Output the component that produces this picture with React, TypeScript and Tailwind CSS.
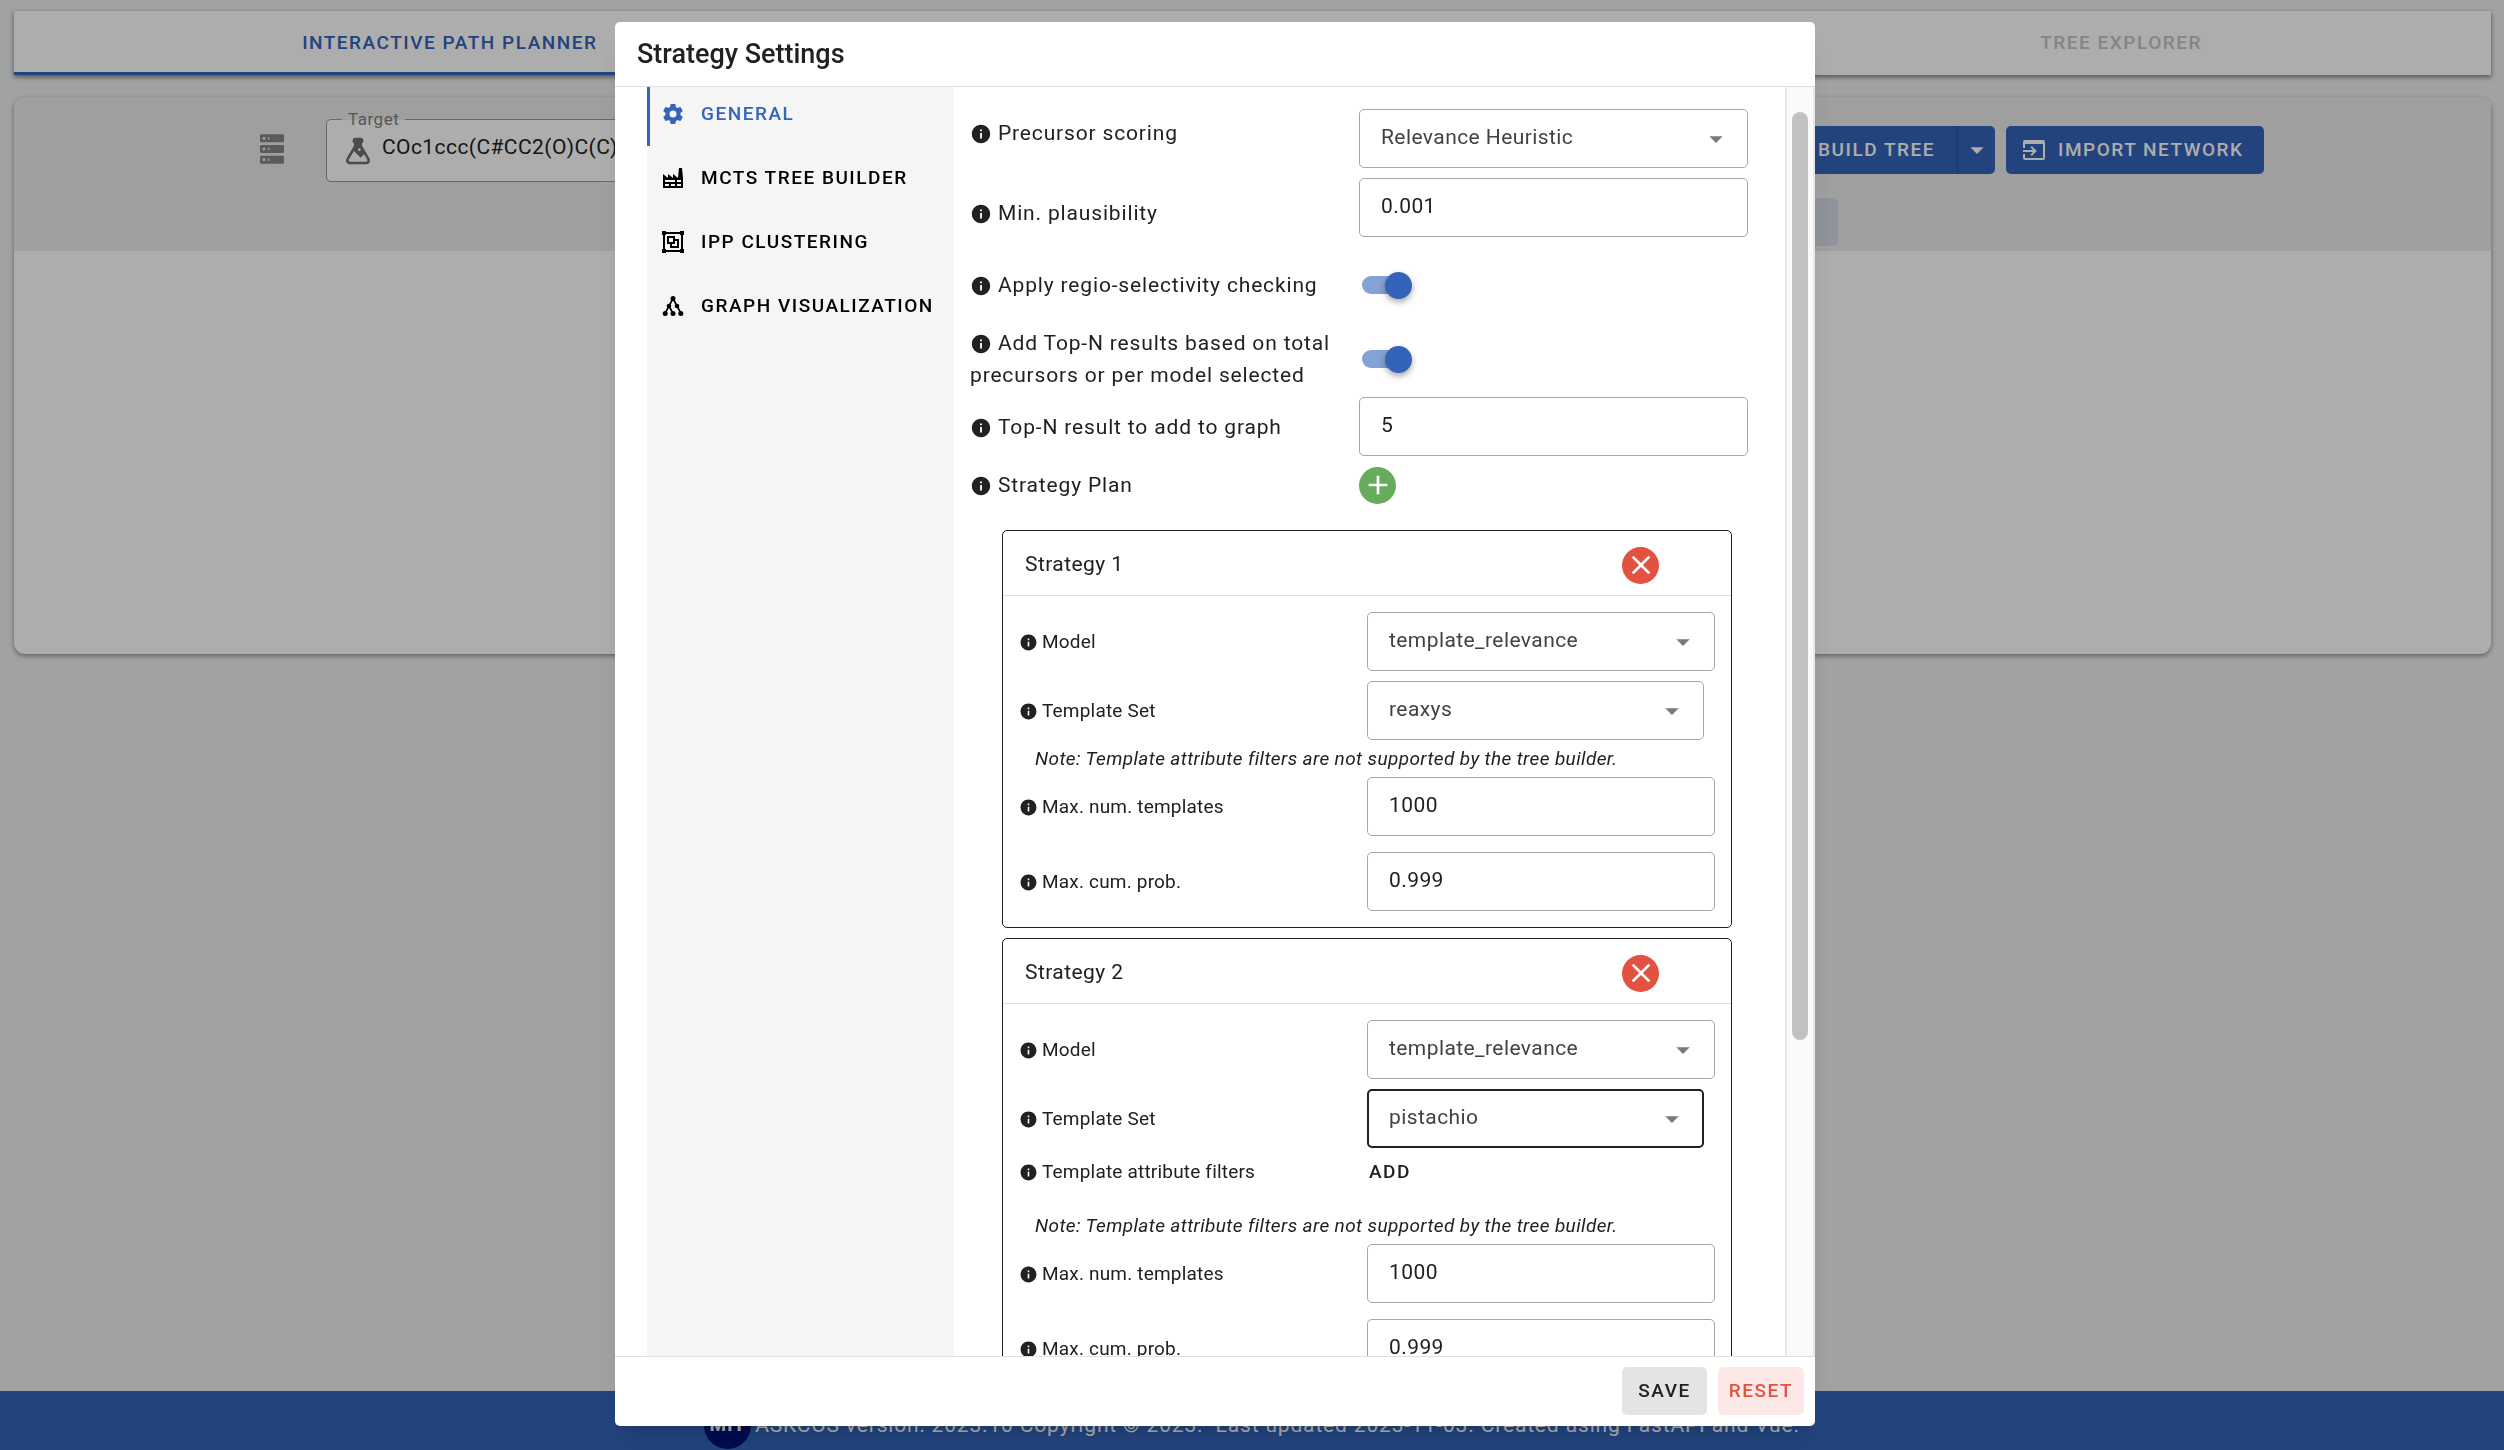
import { useState, type ReactNode } from "react";
import { clsx } from "clsx";
import { MdAdd, MdArrowDropDown, MdClose, MdInfo } from "react-icons/md";

const icons = {
  cog: "M12,15.5A3.5,3.5 0 0,1 8.5,12A3.5,3.5 0 0,1 12,8.5A3.5,3.5 0 0,1 15.5,12A3.5,3.5 0 0,1 12,15.5M19.43,12.97C19.47,12.65 19.5,12.33 19.5,12C19.5,11.67 19.47,11.34 19.43,11L21.54,9.37C21.73,9.22 21.78,8.95 21.66,8.73L19.66,5.27C19.54,5.05 19.27,4.96 19.05,5.05L16.56,6.05C16.04,5.66 15.5,5.32 14.87,5.07L14.5,2.42C14.46,2.18 14.25,2 14,2H10C9.75,2 9.54,2.18 9.5,2.42L9.13,5.07C8.5,5.32 7.96,5.66 7.44,6.05L4.95,5.05C4.73,4.96 4.46,5.05 4.34,5.27L2.34,8.73C2.21,8.95 2.27,9.22 2.46,9.37L4.57,11C4.53,11.34 4.5,11.67 4.5,12C4.5,12.33 4.53,12.65 4.57,12.97L2.46,14.63C2.27,14.78 2.21,15.05 2.34,15.27L4.34,18.73C4.46,18.95 4.73,19.03 4.95,18.95L7.44,17.94C7.96,18.34 8.5,18.68 9.13,18.93L9.5,21.58C9.54,21.82 9.75,22 10,22H14C14.25,22 14.46,21.82 14.5,21.58L14.87,18.93C15.5,18.67 16.04,18.34 16.56,17.94L19.05,18.95C19.27,19.03 19.54,18.95 19.66,18.73L21.66,15.27C21.78,15.05 21.73,14.78 21.54,14.63L19.43,12.97Z",
  factory:
    "M4,18V20H8V18H4M4,14V16H14V14H4M10,18V20H14V18H10M16,14V16H20V14H16M16,18V20H20V18H16M2,22V8L7,12V8L12,12V8L17,12L18,2H21L22,12V22H2Z",
  group:
    "M1,1V5H2V19H1V23H5V22H19V23H23V19H22V5H23V1H19V2H5V1M5,4H19V5H20V19H19V20H5V19H4V5H5M6,6V14H9V18H18V9H14V6M8,8H12V12H8M14,11H16V16H11V14H14",
  server:
    "M4,1H20A1,1 0 0,1 21,2V6A1,1 0 0,1 20,7H4A1,1 0 0,1 3,6V2A1,1 0 0,1 4,1M4,9H20A1,1 0 0,1 21,10V14A1,1 0 0,1 20,15H4A1,1 0 0,1 3,14V10A1,1 0 0,1 4,9M4,17H20A1,1 0 0,1 21,18V22A1,1 0 0,1 20,23H4A1,1 0 0,1 3,22V18A1,1 0 0,1 4,17M9,5H10V3H9V5M9,13H10V11H9V13M9,21H10V19H9V21M5,3V5H7V3H5M5,11V13H7V11H5M5,19V21H7V19H5Z",
  flask:
    "M6,22A3,3 0 0,1 3,19C3,18.4 3.18,17.84 3.5,17.37L9,7.81V6A1,1 0 0,1 8,5V4A2,2 0 0,1 10,2H14A2,2 0 0,1 16,4V5A1,1 0 0,1 15,6V7.81L20.5,17.37C20.82,17.84 21,18.4 21,19A3,3 0 0,1 18,22H6M5,19A1,1 0 0,0 6,20H18A1,1 0 0,0 19,19C19,18.79 18.93,18.59 18.82,18.43L16.53,14.47L14,17L8.93,11.93L5.18,18.43C5.07,18.59 5,18.79 5,19M13,10A1,1 0 0,0 12,11A1,1 0 0,0 13,12A1,1 0 0,0 14,11A1,1 0 0,0 13,10Z",
  importBox:
    "M3,2H21A2,2 0 0,1 23,4V20A2,2 0 0,1 21,22H3A2,2 0 0,1 1,20V16H3V20H21V6H3V10H1V4A2,2 0 0,1 3,2M1,12H11L8.5,9.5L9.9,8.1L14.8,13L9.9,17.9L8.5,16.5L11,14H1Z",
};

function Icon({ name, className }: { name: keyof typeof icons; className: string }) {
  return (
    <svg viewBox="0 0 24 24" fill="currentColor" fillRule="evenodd" className={className} aria-hidden="true">
      <path d={icons[name]} />
    </svg>
  );
}

function TreeIcon({ className }: { className: string }) {
  return (
    <svg viewBox="0 0 24 24" fill="currentColor" stroke="currentColor" className={className} aria-hidden="true">
      <path d="M12,4.5L8,12L4,19.5M12,4.5L16,12L20,19.5M8,12L12,19.5" fill="none" strokeWidth="1.6" />
      <g stroke="none">
        <circle cx="12" cy="4.5" r="2.5" />
        <circle cx="8" cy="12" r="2.3" />
        <circle cx="16" cy="12" r="2.3" />
        <circle cx="4.2" cy="19.5" r="2.5" />
        <circle cx="12" cy="19.5" r="2.5" />
        <circle cx="19.8" cy="19.5" r="2.5" />
      </g>
    </svg>
  );
}

type FieldLabelProps = { htmlFor?: string; small?: boolean; className?: string; children: ReactNode };

function FieldLabel({ htmlFor, small, className, children }: FieldLabelProps) {
  return (
    <label
      htmlFor={htmlFor}
      className={clsx(
        "shrink-0 leading-8",
        small ? "w-[348px] text-[19px] tracking-[0.01em]" : "w-[389px] text-[21px] tracking-[0.04em]",
        className
      )}
    >
      <MdInfo aria-hidden="true" className={clsx("inline", small ? "mr-1 size-[19px]" : "mr-1.5 size-[22px]")} />
      {children}
    </label>
  );
}

function TextBox({ id, value, className }: { id: string; value: string; className: string }) {
  return (
    <input
      id={id}
      type="text"
      defaultValue={value}
      className={clsx(
        "h-[59px] rounded-[5px] border border-[#a6a6a6] bg-white px-[21px] pb-1 text-[21px] tracking-[0.02em] outline-none",
        className
      )}
    />
  );
}

type SelectBoxProps = { id: string; options: string[]; focused?: boolean; className: string };

function SelectBox({ id, options, focused, className }: SelectBoxProps) {
  return (
    <div className={clsx("relative", className)}>
      <select
        id={id}
        className={clsx(
          "h-[59px] w-full appearance-none rounded-[5px] bg-white pb-0.5 text-[21px] tracking-[0.02em] text-[#424242] outline-none",
          focused ? "border-2 border-[#212121] px-5" : "border border-[#a6a6a6] px-[21px]"
        )}
      >
        {options.map((o) => (
          <option key={o}>{o}</option>
        ))}
      </select>
      <MdArrowDropDown
        aria-hidden="true"
        className="pointer-events-none absolute top-[14px] right-4 size-8 text-[#7a7a7a]"
      />
    </div>
  );
}

function Toggle({ id }: { id: string }) {
  const [on, setOn] = useState(true);
  return (
    <span className="relative ml-[3px] flex h-[27px] w-[50px] items-center">
      <input
        id={id}
        type="checkbox"
        role="switch"
        checked={on}
        onChange={() => setOn(!on)}
        className={clsx("h-[18px] w-12 appearance-none rounded-full", on ? "bg-[#84a2d5]" : "bg-gray-400")}
      />
      <span
        className={clsx(
          "pointer-events-none absolute size-[27px] rounded-full shadow-[0_3px_6px_rgba(0,0,0,0.35)]",
          on ? "right-0 bg-[#3364ba]" : "left-0 bg-white"
        )}
      />
    </span>
  );
}

type Strategy = { id: number; model: string; templateSet: string; filters: boolean };

const strategies: Strategy[] = [
  { id: 1, model: "template_relevance", templateSet: "reaxys", filters: false },
  { id: 2, model: "template_relevance", templateSet: "pistachio", filters: true },
];

function StrategyCard({ strategy }: { strategy: Strategy }) {
  const key = `strategy-${strategy.id}`;
  return (
    <section className="rounded-[5px] border border-[#212121]">
      <header className="flex h-[65px] items-center justify-between border-b border-[#e0e0e0] pt-1 pr-[72px] pl-[22px]">
        <h3 className="text-[21px] tracking-[0.02em]">Strategy {strategy.id}</h3>
        <button
          type="button"
          aria-label={`Remove strategy ${strategy.id}`}
          className="flex size-[37px] items-center justify-center rounded-full bg-[#e35141] text-white"
        >
          <MdClose className="size-8" />
        </button>
      </header>
      <div className="px-4 py-4">
        <div className="flex items-center">
          <FieldLabel small htmlFor={`${key}-model`}>Model</FieldLabel>
          <SelectBox id={`${key}-model`} options={[strategy.model]} className="w-[348px]" />
        </div>
        <div className="mt-2.5 flex items-center">
          <FieldLabel small htmlFor={`${key}-set`}>Template Set</FieldLabel>
          <SelectBox
            id={`${key}-set`}
            options={[strategy.templateSet]}
            focused={strategy.filters}
            className="w-[337px]"
          />
        </div>
        {strategy.filters && (
          <div className="flex h-[59px] items-start">
            <FieldLabel small className="py-2">Template attribute filters</FieldLabel>
            <button type="button" className="h-12 px-0.5 text-[19px] font-medium tracking-[0.08em]">
              ADD
            </button>
          </div>
        )}
        <p className="pl-4 text-[19px] leading-[37px] tracking-[0.02em] italic">
          Note: Template attribute filters are not supported by the tree builder.
        </p>
        <div className="flex items-center">
          <FieldLabel small htmlFor={`${key}-num`}>Max. num. templates</FieldLabel>
          <TextBox id={`${key}-num`} value="1000" className="w-[348px]" />
        </div>
        <div className="mt-4 flex items-center">
          <FieldLabel small htmlFor={`${key}-prob`}>Max. cum. prob.</FieldLabel>
          <TextBox id={`${key}-prob`} value="0.999" className="w-[348px]" />
        </div>
      </div>
    </section>
  );
}

const settingsTabs = [
  { label: "General", icon: <Icon name="cog" className="size-6" />, active: true },
  { label: "MCTS Tree Builder", icon: <Icon name="factory" className="size-6" /> },
  { label: "IPP Clustering", icon: <Icon name="group" className="size-6" /> },
  { label: "Graph Visualization", icon: <TreeIcon className="size-6" /> },
];

function SettingsDialog() {
  return (
    <div
      role="dialog"
      aria-modal="true"
      aria-labelledby="settings-title"
      className="flex h-full w-[1200px] max-w-full flex-col overflow-hidden rounded-[5px] bg-white shadow-xl"
    >
      <h2
        id="settings-title"
        className="h-[65px] shrink-0 border-b border-[#e0e0e0] pl-[22px] text-[27px] leading-[64px] font-medium"
      >
        Strategy Settings
      </h2>

      <div className="flex min-h-0 flex-1">
        <div className="flex min-w-0 flex-1 overflow-hidden pl-8">
          <nav aria-label="Settings sections" className="w-[307px] shrink-0 bg-[#f5f5f5]">
            {settingsTabs.map((tab) => (
              <button
                key={tab.label}
                type="button"
                className={clsx(
                  "flex w-full items-center gap-4 border-l-[3px] pl-[11px] text-[19px] font-medium tracking-[0.08em] whitespace-nowrap uppercase",
                  tab.active
                    ? "h-[59px] border-[#3364ba] pb-[5px] text-[#3364ba]"
                    : "h-16 border-transparent text-black"
                )}
              >
                {tab.icon}
                {tab.label}
              </button>
            ))}
          </nav>

          <form className="min-w-0 flex-1 pt-[22px] pr-[37px] pl-4">
            <div className="flex items-start">
              <FieldLabel htmlFor="scoring" className="py-2">Precursor scoring</FieldLabel>
              <SelectBox id="scoring" options={["Relevance Heuristic"]} className="w-[389px]" />
            </div>
            <div className="mt-2.5 flex items-end">
              <FieldLabel htmlFor="plausibility" className="py-2">Min. plausibility</FieldLabel>
              <TextBox id="plausibility" value="0.001" className="w-[389px]" />
            </div>
            <div className="mt-6 flex h-12 items-center">
              <FieldLabel htmlFor="regio">Apply regio-selectivity checking</FieldLabel>
              <Toggle id="regio" />
            </div>
            <div className="mt-[18px] flex h-16 items-center">
              <FieldLabel htmlFor="per-model">
                Add Top-N results based on total precursors or per model selected
              </FieldLabel>
              <Toggle id="per-model" />
            </div>
            <div className="mt-1.5 flex items-center">
              <FieldLabel htmlFor="top-n">Top-N result to add to graph</FieldLabel>
              <TextBox id="top-n" value="5" className="w-[389px]" />
            </div>
            <div className="mt-2.5 flex h-[38px] items-center">
              <FieldLabel htmlFor="add-strategy">Strategy Plan</FieldLabel>
              <button
                id="add-strategy"
                type="button"
                aria-label="Add strategy"
                className="flex size-[37px] items-center justify-center rounded-full bg-[#67ac5b] text-white"
              >
                <MdAdd className="size-8" />
              </button>
            </div>
            <div className="mt-[26px] mr-4 ml-8 flex flex-col gap-2.5">
              {strategies.map((s) => (
                <StrategyCard key={s.id} strategy={s} />
              ))}
            </div>
          </form>
        </div>

        {/* scrollbar */}
        <div className="flex w-[30px] shrink-0 justify-center border-x-2 border-[#e8e8e8] bg-[#fafafa] pt-[25px]">
          <div className="h-[928px] w-4 rounded-full bg-[#c1c1c1]" />
        </div>
      </div>

      <footer className="flex h-[70px] shrink-0 items-start justify-end gap-[11px] border-t border-[#e0e0e0] pt-2.5 pr-[11px]">
        <button
          type="button"
          className="h-12 w-[85px] rounded-[5px] bg-[#e4e4e4] text-[19px] font-medium tracking-[0.08em]"
        >
          SAVE
        </button>
        <button
          type="button"
          className="h-12 w-[86px] rounded-[5px] bg-[#fce9e7] text-[19px] font-medium tracking-[0.08em] text-[#e35141]"
        >
          RESET
        </button>
      </footer>
    </div>
  );
}

export default function App() {
  return (
    <div className="flex min-h-screen flex-col bg-[#eceff1] font-['Roboto',sans-serif] text-[#212121]">
      <main className="flex-1 pt-[11px] pr-[13px] pl-3.5">
        <nav
          aria-label="Main"
          className="flex h-16 bg-white text-[19px] font-medium tracking-[0.08em] uppercase shadow-[0_2px_5px_rgba(0,0,0,0.5)]"
        >
          <button
            type="button"
            className="flex-[872] border-b-[3px] border-[#3364ba] pt-[3px] text-[#3364ba] uppercase"
          >
            Interactive Path Planner
          </button>
          <div className="flex-[866]" />
          <button type="button" disabled className="flex-[740] text-[#c4c4c4] uppercase">
            Tree Explorer
          </button>
        </nav>

        <section className="mt-[22px] h-[557px] overflow-hidden rounded-[11px] bg-white shadow-[0_2px_5px_rgba(0,0,0,0.4)]">
          <div className="flex h-[154px] items-start justify-between bg-[#ebebeb] pr-[227px] pl-[242px]">
            <div className="flex">
              <Icon name="server" className="mt-9 size-8 text-[#858585]" />
              <fieldset className="mt-2.5 ml-[38px] flex h-[75px] w-[640px] rounded-[5px] border border-[#9a9a9a] bg-white bg-clip-padding pl-[15px]">
                <legend className="px-1.5 text-[17px] leading-6 tracking-[0.03em] text-[#808080]">
                  <label htmlFor="target">Target</label>
                </legend>
                <Icon name="flask" className="mt-1 size-8 shrink-0 text-[#707070]" />
                <input
                  id="target"
                  type="text"
                  defaultValue="COc1ccc(C#CC2(O)C(C)"
                  className="ml-2 h-8 flex-1 bg-transparent text-[21px] tracking-[0.02em] outline-none"
                />
              </fieldset>
            </div>
            <div className="flex flex-col">
              <div className="mt-[29px] flex text-[19px] font-medium tracking-[0.08em] text-white">
                <button type="button" className="h-12 rounded-l-[5px] bg-[#3364ba] pr-[22px] pl-14">
                  BUILD TREE
                </button>
                <button
                  type="button"
                  aria-label="More build options"
                  className="flex h-12 w-[38px] items-center justify-center rounded-r-[5px] border-l border-[#2c559e] bg-[#3364ba]"
                >
                  <MdArrowDropDown className="size-8" />
                </button>
                <button
                  type="button"
                  className="ml-[11px] flex h-12 w-[258px] items-center gap-3 rounded-[5px] bg-[#3364ba] pl-4"
                >
                  <Icon name="importBox" className="size-6" />
                  IMPORT NETWORK
                </button>
              </div>
              <button
                type="button"
                disabled
                aria-label="Clear"
                className="mt-6 h-12 w-[76px] rounded-[5px] bg-[#d3dae6]"
              />
            </div>
          </div>
        </section>
      </main>

      <footer className="flex h-[59px] items-center justify-center gap-1 bg-[#3364ba] pt-2.5 text-[21px] tracking-[0.04em] text-white">
        <span className="flex size-[47px] items-center justify-center rounded-full bg-[#001278] text-[19px] font-bold">
          MIT
        </span>
        <span className="whitespace-pre">
          ASKCOS version: 2023.10 Copyright © 2023.  Last updated 2023-11-03. Created using FastAPI and Vue.
        </span>
      </footer>

      <div className="fixed inset-0 flex justify-center bg-black/32 pt-[22px] pr-[98px] pb-6 pl-6">
        <SettingsDialog />
      </div>
    </div>
  );
}
